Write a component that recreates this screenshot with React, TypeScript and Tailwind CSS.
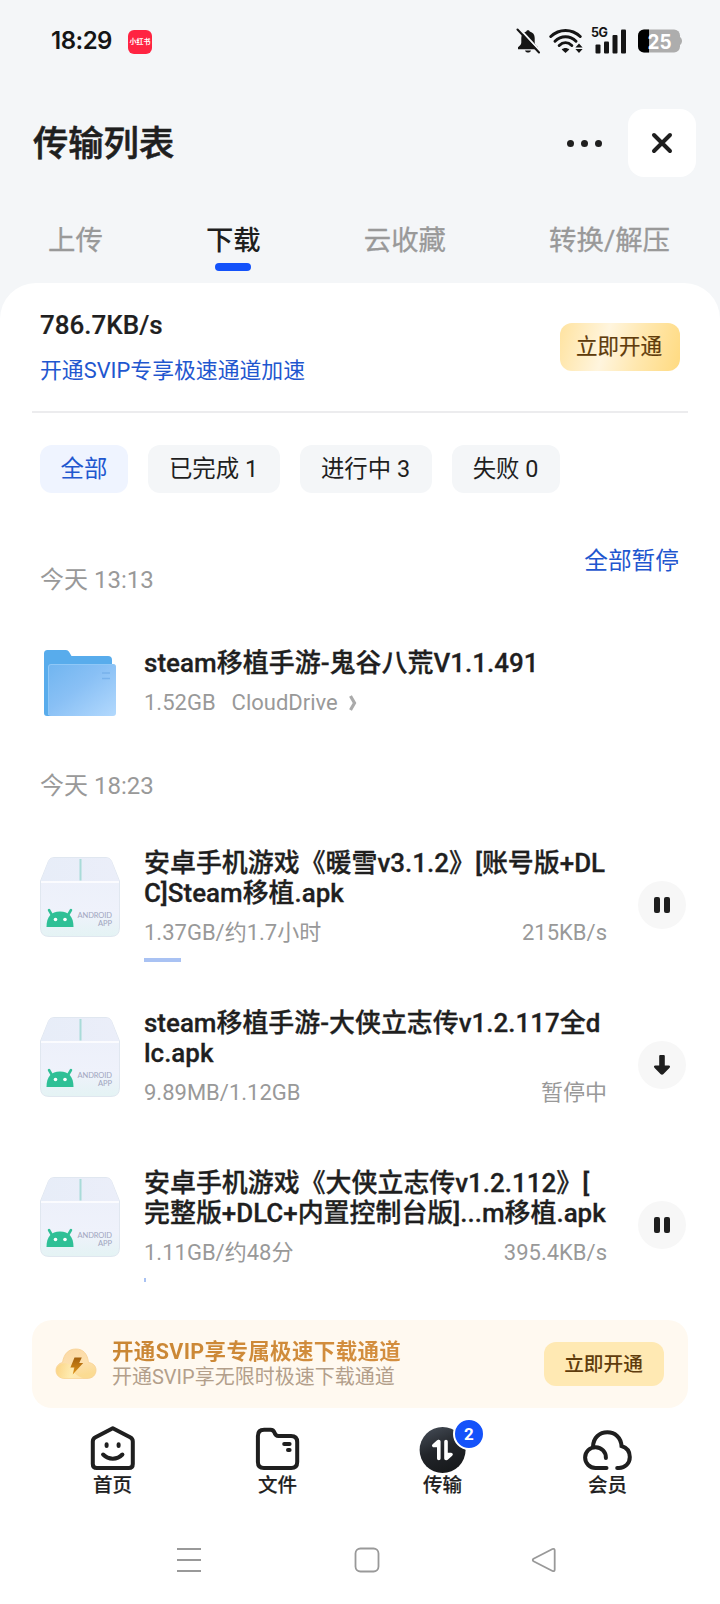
import React from 'react';

type Download = {
  lines: string[];
  size: string;
  status: string;
  progress: number;
  paused?: boolean;
};

type Tab = {
  label: string;
  icon: React.ReactNode;
};

const downloads: Download[] = [
  {
    lines: ['安卓手机游戏《暖雪v3.1.2》[账号版+DL', 'C]Steam移植.apk'],
    size: '1.37GB/约1.7小时',
    status: '215KB/s',
    progress: 37,
  },
  {
    lines: ['steam移植手游-大侠立志传v1.2.117全d', 'lc.apk'],
    size: '9.89MB/1.12GB',
    status: '暂停中',
    progress: 0,
    paused: true,
  },
  {
    lines: ['安卓手机游戏《大侠立志传v1.2.112》[', '完整版+DLC+内置控制台版]...m移植.apk'],
    size: '1.11GB/约48分',
    status: '395.4KB/s',
    progress: 2,
  },
];

const StatusBar: React.FC = () => (
  <div className="flex h-[82px] items-center justify-between pl-[51px] pr-[38px]">
    <div className="flex items-center gap-[16px]">
      <span className="w-[61px] whitespace-nowrap font-['Inter'] text-[24px] font-semibold leading-none tracking-[-0.5px] text-[#151515]">18:29</span>
      <div className="mt-[2px] flex h-6 w-6 items-center justify-center rounded-[6px] bg-[#ff2442]">
        <span className="whitespace-nowrap text-[7px] font-bold leading-none text-white">小红书</span>
      </div>
    </div>
    <div className="flex items-center">
      {/* Muted bell */}
      <svg width="24" height="26" viewBox="0 0 24 26" className="mr-[9px]">
        <path d="M12 2.2c.9 0 1.5.5 1.700 1.200 3.300.8 5 3.200 5 6.600v4.500c0 1.700 1.300 3.200 3.300 4.700v2H2v-2c2-1.500 3.300-3 3.300-4.700V10c0-3.400 1.700-5.800 5-6.600.2-.7.8-1.200 1.700-1.200z" fill="#151515" />
        <path d="M9 22.500h6c-.5 1.500-1.500 2-3 2s-2.500-.5-3-2z" fill="#151515" />
        <path d="M3 0l21 23" stroke="#f4f6f8" strokeWidth="2" />
        <path d="M1.500 1.500L23 24.500" stroke="#151515" strokeWidth="2" strokeLinecap="round" />
      </svg>
      {/* Wifi */}
      <svg width="34" height="26" viewBox="0 0 34 26" fill="none" className="mr-[8px]">
        <path d="M1.800 8.500c8.500-8 20.900-8 29.400 0" stroke="#151515" strokeWidth="3" strokeLinecap="round" />
        <path d="M6 13.200c6-6 15-6 21 0" stroke="#151515" strokeWidth="3" strokeLinecap="round" />
        <path d="M10.200 17.500c3.800-3.600 8.800-3.600 12.600 0" stroke="#151515" strokeWidth="3" strokeLinecap="round" />
        <path d="M16.500 25l-3.800-3.600c2.200-2 5.400-2 7.600 0z" fill="#151515" />
        <path d="M30 15.500l3.600 4h-7.200zM30 25l3.600-4h-7.200z" fill="#151515" />
      </svg>
      {/* Signal */}
      <div className="relative mr-[11px] h-[26px] w-[36px]">
        <span className="absolute left-0 -top-[3px] whitespace-nowrap font-['Inter'] text-[12.500px] font-bold leading-[16px] tracking-[-0.600px] text-[#151515]">5G</span>
        <svg width="36" height="26" viewBox="0 0 36 26">
          <rect x="4.500" y="16.500" width="5" height="9" rx="1" fill="#151515" />
          <rect x="13" y="13.500" width="5" height="12" rx="1" fill="#151515" />
          <rect x="21.500" y="7" width="5" height="18.500" rx="1" fill="#151515" />
          <rect x="30" y="1.500" width="5" height="24" rx="1" fill="#151515" />
        </svg>
      </div>
      {/* Battery */}
      <svg width="44" height="24" viewBox="0 0 44 24">
        <rect x="0" y="0.500" width="42" height="23" rx="6" fill="#adadad" />
        <path d="M42 8c1.300 1 2 2.500 2 4s-.7 3-2 4z" fill="#adadad" />
        <path d="M11 .5H6a6 6 0 0 0-6 6v11a6 6 0 0 0 6 6h5z" fill="#000" />
        <text x="21.500" y="19.500" textAnchor="middle" fontFamily="Inter" fontSize="20.500" fontWeight="700" fill="#fff" textLength="24" lengthAdjust="spacingAndGlyphs">25</text>
      </svg>
    </div>
  </div>
);

const FolderIcon: React.FC = () => (
  <svg width="80" height="80" viewBox="0 0 80 80">
    <defs>
      <linearGradient id="folderFront" x1="0" y1="0" x2="1" y2="1">
        <stop offset="0" stopColor="#70b5f0" />
        <stop offset="0.450" stopColor="#89c0f5" />
        <stop offset="1" stopColor="#b3d9fd" />
      </linearGradient>
    </defs>
    <path d="M4 10.500q0-3.500 3.500-3.500H26q2 0 3 1.800L31.500 13H68q4 0 4 4v20L40 73H7q-3 0-3-3z" fill="#58acec" />
    <rect x="8" y="21" width="68" height="52" rx="3" fill="url(#folderFront)" />
    <path d="M8.500 72V24q0-2.500 2.500-2.500h61.500q3 0 3 3" fill="none" stroke="#8fc8f7" strokeWidth="1" />
    <path d="M62 30h8M62 35.500h8" stroke="#78b2ec" strokeWidth="1.600" />
  </svg>
);

const ApkIcon: React.FC = () => (
  <svg width="80" height="80" viewBox="0 0 80 80">
    <defs>
      <linearGradient id="apkBody" x1="0" y1="0" x2="0" y2="1">
        <stop offset="0" stopColor="#ebeffa" />
        <stop offset="0.700" stopColor="#eff2fb" />
        <stop offset="1" stopColor="#e4f3f4" />
      </linearGradient>
      <linearGradient id="apkTop" x1="0" y1="0" x2="1" y2="0">
        <stop offset="0" stopColor="#e7edf8" />
        <stop offset="1" stopColor="#ebeef9" />
      </linearGradient>
    </defs>
    <path d="M8.500 4Q10 .5 14 .5h52q4 0 5.500 3.500L79.500 24v47q0 8.500-8.500 8.500H9Q.5 79.500.5 71V24z" fill="url(#apkBody)" stroke="#dbe2ec" strokeWidth="0.800" />
    <path d="M8.500 4.300Q10 1 14 1h52q4 0 5.500 3.300L79 24H1z" fill="url(#apkTop)" />
    <path d="M1 25h78" stroke="#fff" strokeWidth="1.400" />
    <path d="M40.500 2v21.500" stroke="#a9dbd8" strokeWidth="2" />
    <path d="M9 53l3.500 6M31 53l-3.500 6" stroke="#2fc096" strokeWidth="2.500" strokeLinecap="round" />
    <path d="M6.500 70C6.500 60 11 54.500 20 54.500S33.500 60 33.500 70z" fill="#2fc096" />
    <circle cx="15.500" cy="62.500" r="1.800" fill="#fff" />
    <circle cx="25" cy="62.500" r="1.800" fill="#fff" />
    <text x="37.500" y="61.300" fontFamily="Lato" fontSize="7.500" fill="#a0a5be" textLength="34.500">ANDROID</text>
    <text x="58" y="69" fontFamily="Lato" fontSize="7.500" fill="#a0a5be" textLength="14">APP</text>
  </svg>
);

const PauseIcon: React.FC = () => (
  <svg width="18" height="18" viewBox="0 0 18 18">
    <rect x="1" y="1" width="6" height="16" rx="2" fill="#1f1f1f" />
    <rect x="11" y="1" width="6" height="16" rx="2" fill="#1f1f1f" />
  </svg>
);

const ResumeIcon: React.FC = () => (
  <svg width="18" height="22" viewBox="0 0 18 22">
    <path d="M6.200 2q0-1 1-1h3.600q1 0 1 1v9.500h4q2 .3.800 2.200L10.500 20q-1.500 1.500-3 0L1.400 13.700q-1.200-1.900.8-2.200h4z" fill="#1f1f1f" />
  </svg>
);

const CloudBoltIcon: React.FC = () => (
  <svg width="42" height="34" viewBox="0 0 42 34">
    <defs>
      <linearGradient id="goldCloud" x1="0" y1="0" x2="0.300" y2="1">
        <stop offset="0" stopColor="#fbd8a4" />
        <stop offset="0.600" stopColor="#fde0ae" />
        <stop offset="1" stopColor="#fbdb92" />
      </linearGradient>
      <linearGradient id="goldPuff" x1="0" y1="0.300" x2="1" y2="0.500">
        <stop offset="0" stopColor="#fbd27c" />
        <stop offset="0.600" stopColor="#fff0b8" />
        <stop offset="1" stopColor="#fde6b8" />
      </linearGradient>
      <linearGradient id="bolt" x1="0" y1="0" x2="0" y2="1">
        <stop offset="0" stopColor="#a3600f" />
        <stop offset="1" stopColor="#e09418" />
      </linearGradient>
    </defs>
    <path d="M10 31.500C4.500 31.500 1 28 1 23.500c0-4 2.500-7 6.500-8C9 6 14 2 21 2s11.500 4.500 12.500 13.500c4.500.5 7.500 3.500 7.500 7.500 0 5-3.500 8.500-9 8.500z" fill="url(#goldCloud)" stroke="#f8d092" strokeWidth="0.800" />
    <path d="M7.500 16.500c5-1 10 1.500 11 6.500s5.500 6.500 10 8.300H10c-5.500 0-8.600-3-8.600-7.800 0-3.500 2.300-6 6.100-7z" fill="url(#goldPuff)" opacity="0.800" />
    <path d="M19.500 10.500h7.300l-2.600 5.500h4l-10.500 11.500 1.700-7h-4z" fill="url(#bolt)" />
  </svg>
);

const tabs: Tab[] = [
  {
    label: '首页',
    icon: (
      <svg width="48" height="48" viewBox="0 0 48 48" fill="none" stroke="#1f1f1f" strokeWidth="4" strokeLinecap="round" strokeLinejoin="round">
        <path d="M23.800 4.200L41.100 13.300Q43.800 14.700 43.800 17.500V40q0 4-4 4H7.800q-4 0-4-4V17.500q0-2.800 2.700-4.200z" />
        <path d="M14.100 30.500c5.500 5.500 14 5.500 19.300 0" />
        <path d="M17.600 20.300v1.700M29.600 20.300v1.700" />
      </svg>
    ),
  },
  {
    label: '文件',
    icon: (
      <svg width="48" height="48" viewBox="0 0 48 48" fill="none" stroke="#1f1f1f" strokeWidth="4" strokeLinecap="round" strokeLinejoin="round">
        <path d="M3.900 12q0-6.300 6.300-6.300h6.300q3 0 4 3 1 3.300 4 3.300h12.500q6.200 0 6.200 6v20q0 6-6 6H9.900q-6 0-6-6z" />
        <path d="M30.200 20h5.400M34 26h1.600" />
      </svg>
    ),
  },
  {
    label: '传输',
    icon: (
      <svg width="48" height="48" viewBox="0 0 48 48" className="overflow-visible">
        <defs>
          <linearGradient id="disc" x1="0.200" y1="0" x2="0.600" y2="1">
            <stop offset="0" stopColor="#434a54" />
            <stop offset="0.500" stopColor="#22252a" />
            <stop offset="1" stopColor="#17191b" />
          </linearGradient>
        </defs>
        <circle cx="23.600" cy="26" r="23" fill="url(#disc)" />
        <path d="M19.800 17.500v17M19.300 17.500l-4.500 4h4.500zM27 17.500v17M27.500 34.500l4.500-4h-4.500z" fill="#fff" stroke="#fff" strokeWidth="3.600" strokeLinecap="round" strokeLinejoin="round" />
      </svg>
    ),
  },
  {
    label: '会员',
    icon: (
      <svg width="48" height="48" viewBox="0 0 48 48" fill="none" stroke="#1f1f1f" strokeWidth="4" strokeLinecap="round" className="overflow-visible">
        <path d="M22.500 44H11.700A10.400 10.400 0 1 1 21.900 34" />
        <path d="M9 22.500C9.500 13.500 15.500 8.300 23.400 8.300c7.600 0 13.600 5.200 14.100 13.700 5 1.500 8.300 5.500 8.300 11 0 6.500-4.800 11-10.800 11H33.200" />
      </svg>
    ),
  },
];

const DownloadRow: React.FC<{ item: Download }> = ({ item }) => (
  <div className="flex h-[114px]">
    <div className="mt-[9px] h-20 w-20">
      <ApkIcon />
    </div>
    <div className="ml-6 w-[463px]">
      {item.lines.map((line) => (
        <div key={line} className="whitespace-nowrap text-[25.950px] font-medium leading-[30px] [-webkit-text-stroke:0.3px]">{line}</div>
      ))}
      <div className="mt-[11px] flex justify-between text-[22px] leading-[28px] text-[#999999]">
        <span>{item.size}</span>
        <span>{item.status}</span>
      </div>
      <div className="mt-[11px] h-1 bg-[#a9c2f3]" style={{ width: item.progress }} />
    </div>
    <div className="ml-[31px] mt-[33px] flex h-12 w-12 items-center justify-center rounded-full bg-[#f7f7f7]">
      {item.paused ? <ResumeIcon /> : <PauseIcon />}
    </div>
  </div>
);

const App: React.FC = () => {
  return (
    <div className="flex h-[1604px] w-[720px] flex-col overflow-hidden bg-[#f4f6f8] font-['Roboto','Noto_Sans_CJK_SC',sans-serif] text-[#1f1f1f]">
      <StatusBar />

      {/* Page header */}
      <header className="mt-[27px] flex h-[68px] items-center justify-between pl-[33px] pr-6">
        <h1 className="mt-px text-[35.300px] font-medium leading-[68px] [-webkit-text-stroke:0.6px]">传输列表</h1>
        <div className="flex items-center">
          <div className="mr-[26px] flex gap-[7px]">
            <span className="h-[7px] w-[7px] rounded-full bg-[#1f1f1f]" />
            <span className="h-[7px] w-[7px] rounded-full bg-[#1f1f1f]" />
            <span className="h-[7px] w-[7px] rounded-full bg-[#1f1f1f]" />
          </div>
          <button className="flex h-[68px] w-[68px] items-center justify-center rounded-[16px] bg-white">
            <svg width="22" height="22" viewBox="0 0 22 22" stroke="#1f1f1f" strokeWidth="4" strokeLinecap="round">
              <path d="M3 3l16 16M19 3l-16 16" />
            </svg>
          </button>
        </div>
      </header>

      {/* Top tabs */}
      <nav className="flex h-[106px] justify-between pl-[48px] pr-[50px] pt-11 text-[27.400px] leading-[40px] text-[#999999]">
        <span className="[-webkit-text-stroke:0.3px]">上传</span>
        <div className="flex flex-col items-center text-[#1f1f1f]">
          <span className="font-medium">下载</span>
          <span className="mt-[2px] h-2 w-9 rounded-full bg-[#1452fa]" />
        </div>
        <span className="[-webkit-text-stroke:0.3px]">云收藏</span>
        <span className="[-webkit-text-stroke:0.3px]">转换/解压</span>
      </nav>

      <main className="flex flex-1 flex-col rounded-t-[36px] bg-white">
        {/* Speed summary */}
        <section className="mx-8 flex h-[130px] items-start justify-between border-b-2 border-[#ececee] pl-2 pr-2">
          <div className="pt-[26px]">
            <div className="text-[26px] font-medium leading-[32px] [-webkit-text-stroke:0.2px]">786.7KB/s</div>
            <div className="mt-[14px] text-[21.850px] leading-[32px] text-[#1f57cf]">开通SVIP专享极速通道加速</div>
          </div>
          <button className="mt-10 h-12 w-[120px] rounded-[12px] bg-[linear-gradient(105deg,#ffe3a0_0%,#fff5de_38%,#ffe8b0_65%,#ffda80_100%)] pr-[2px] text-[21.500px] text-[#5f3c0c] [-webkit-text-stroke:0.2px]">
            立即开通
          </button>
        </section>

        {/* Filters */}
        <div className="ml-10 mt-8 flex h-12 gap-5 text-[23.400px] leading-[49px]">
          <span className="w-[88px] rounded-[12px] bg-[#eff4ff] text-center text-[#1f57cf]">全部</span>
          <span className="w-[132px] rounded-[12px] bg-[#f4f6f8] pr-px text-center">已完成 1</span>
          <span className="w-[132px] rounded-[12px] bg-[#f4f6f8] pr-px text-center">进行中 3</span>
          <span className="w-[108px] rounded-[12px] bg-[#f4f6f8] pr-px text-center">失败 0</span>
        </div>

        <div className="ml-10 mr-[41px] mt-[52px] flex h-[51px] justify-between text-[24px] leading-[32px]">
          <span className="self-end text-[#999999]">今天 13:13</span>
          <span className="text-[23.700px] leading-[33px] text-[#1f57cf]">全部暂停</span>
        </div>

        {/* Finished folder */}
        <div className="ml-10 mt-[47px] flex h-20">
          <FolderIcon />
          <div className="ml-6 pt-[5px]">
            <div className="text-[26px] font-medium leading-[30px] [-webkit-text-stroke:0.3px]">steam移植手游-鬼谷八荒V1.1.491</div>
            <div className="mt-[11px] flex items-center text-[22px] leading-[28px] text-[#999999]">
              <span>1.52GB</span>
              <span className="ml-4">CloudDrive</span>
              <svg width="8" height="16" viewBox="0 0 8 16" fill="none" stroke="#aaaaaa" strokeWidth="3.200" className="ml-[11px]">
                <path d="M1.500 1l4 7-4 7" />
              </svg>
            </div>
          </div>
        </div>

        <div className="ml-10 mt-[47px] text-[24px] leading-[32px] text-[#999999]">今天 18:23</div>

        {/* Active downloads */}
        <div className="ml-10 mt-[46px] flex flex-col gap-[46px]">
          {downloads.map((item) => (
            <DownloadRow key={item.size} item={item} />
          ))}
        </div>

        {/* SVIP banner */}
        <section className="mx-8 mt-[38px] flex h-[88px] items-center rounded-[20px] bg-[#fff9f0] pl-[23px] pr-6">
          <CloudBoltIcon />
          <div className="ml-[15px] flex-1 whitespace-nowrap">
            <div className="bg-[linear-gradient(90deg,#c98633,#d99245)] bg-clip-text text-[21.500px] font-bold leading-[26px] tracking-[0.350px] text-transparent">开通SVIP享专属极速下载通道</div>
            <div className="text-[20px] leading-[24px] text-[#b39f8b]">开通SVIP享无限时极速下载通道</div>
          </div>
          <button className="h-11 w-[120px] rounded-[12px] bg-[#ffe9b3] pr-px pt-px text-[19.700px] font-medium text-[#5f3c0c]">立即开通</button>
        </section>

        {/* Bottom tab bar */}
        <nav className="mt-4 grid grid-cols-4 px-[30px]">
          {tabs.map((tab) => (
            <div key={tab.label} className="relative flex flex-col items-center">
              {tab.icon}
              <span className="pt-px text-[19.500px] font-medium leading-[26px] [-webkit-text-stroke:0.2px]">{tab.label}</span>
              {tab.label === '传输' && (
                <span className="absolute left-[93px] top-[-6px] flex h-8 w-8 items-center justify-center rounded-full border-2 border-white bg-[#1452fa] text-[17px] font-bold leading-none text-white">2</span>
              )}
            </div>
          ))}
        </nav>

        {/* System navigation */}
        <div className="mt-[47px] flex justify-between pl-[176px] pr-[163px]">
          <svg width="26" height="28" viewBox="0 0 26 28" stroke="#999999" strokeWidth="1.800">
            <path d="M1 3h24M1 14h24M1 25h24" />
          </svg>
          <svg width="26" height="28" viewBox="0 0 26 28" fill="none" stroke="#999999" strokeWidth="1.800">
            <rect x="1.500" y="2.500" width="23" height="23" rx="5" />
          </svg>
          <svg width="26" height="28" viewBox="0 0 26 28" fill="none" stroke="#999999" strokeWidth="1.800" strokeLinejoin="round">
            <path d="M2.500 12.800L21.500 3Q23.700 2.200 23.700 4.500v19q0 2.300-2.200 1.500L2.500 15.200q-1.500-1.200 0-2.400z" />
          </svg>
        </div>
      </main>
    </div>
  );
};

export default App;
